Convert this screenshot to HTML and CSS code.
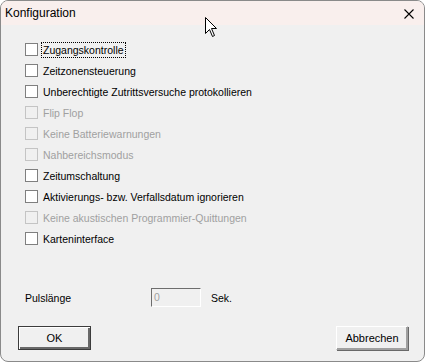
FILE: index.html
```html
<!DOCTYPE html>
<html lang="de">
<head>
    <meta charset="UTF-8">
    <meta name="viewport" content="width=device-width, initial-scale=1.0">
    <title>Konfiguration</title>
    <link rel="stylesheet" href="styles.css">
</head>
<body>
    <div class="window">
        <div class="titlebar">
            <span class="title">Konfiguration</span>
            <svg class="close" width="10" height="10" viewBox="0 0 10 10">
                <path d="M0.5 0.5 L9.5 9.5 M9.5 0.5 L0.5 9.5" stroke="#000" stroke-width="1.1" fill="none"/>
            </svg>
        </div>
        <div class="content">
            <ul class="options">
                <li><span class="box"></span><span class="label focus">Zugangskontrolle</span></li>
                <li><span class="box"></span><span class="label">Zeitzonensteuerung</span></li>
                <li><span class="box"></span><span class="label">Unberechtigte Zutrittsversuche protokollieren</span></li>
                <li class="disabled"><span class="box"></span><span class="label">Flip Flop</span></li>
                <li class="disabled"><span class="box"></span><span class="label">Keine Batteriewarnungen</span></li>
                <li class="disabled"><span class="box"></span><span class="label">Nahbereichsmodus</span></li>
                <li><span class="box"></span><span class="label">Zeitumschaltung</span></li>
                <li><span class="box"></span><span class="label">Aktivierungs- bzw. Verfallsdatum ignorieren</span></li>
                <li class="disabled"><span class="box"></span><span class="label">Keine akustischen Programmier-Quittungen</span></li>
                <li><span class="box"></span><span class="label">Karteninterface</span></li>
            </ul>
            <div class="pulse">
                <span class="pulse-label">Pulslänge</span>
                <span class="field">0</span>
                <span class="unit">Sek.</span>
            </div>
            <div class="buttons">
                <button class="btn default">OK</button>
                <button class="btn">Abbrechen</button>
            </div>
        </div>
        <svg class="cursor" width="13" height="21" viewBox="0 0 13 21">
            <path d="M0.5 0.5 L0.5 16.5 L4.5 12.5 L7.5 19.5 L9.5 18.5 L6.5 11.5 L11.5 11.5 Z" fill="#fff" stroke="#000" stroke-width="1" stroke-linejoin="miter"/>
        </svg>
    </div>
</body>
</html>
```

FILE: styles.css
```css
body, ul {
    margin: 0;
    padding: 0;
}

body {
    font-family: "Liberation Sans", Arial, sans-serif;
    font-size: 10.5px;
    background-color: #ffffff;
}

.window {
    position: relative;
    width: 425px;
    height: 362px;
    box-sizing: border-box;
    border: 1px solid #8a8a8a;
    border-radius: 8px;
    background-color: #f0f0f0;
    overflow: hidden;
    display: flex;
    flex-direction: column;
}

.titlebar {
    height: 24px;
    background-color: #f9efed;
    display: flex;
    align-items: center;
    justify-content: space-between;
    padding: 0 10px 0 4px;
}

.title {
    font-family: "Liberation Sans", Arial, sans-serif;
    font-size: 12px;
    color: #000;
}

.close {
    display: block;
    margin-top: 1px;
}

.content {
    flex: 1;
    display: flex;
    flex-direction: column;
    padding: 14px 14px 0 17px;
}

.options {
    list-style: none;
    padding-left: 7px;
}

.options li {
    height: 21px;
    display: flex;
    align-items: center;
    gap: 4px;
    color: #000;
}

.box {
    width: 11px;
    height: 11px;
    border: 1px solid #7f7f7f;
    background-color: #ffffff;
}

.label {
    padding: 0 1px;
    line-height: 14px;
}

.focus {
    outline: 1px dotted #000;
    outline-offset: 0;
}

.options li.disabled {
    color: #a0a0a0;
}

.disabled .box {
    background-color: #f0f0f0;
    border-color: #c4c4c4;
}

.pulse {
    display: flex;
    align-items: center;
    margin-top: 39px;
    padding-left: 7px;
    height: 19px;
}

.pulse-label {
    width: 126px;
}

.field {
    width: 46px;
    height: 17px;
    box-sizing: content-box;
    border: 1px solid #a0a0a0;
    border-top-color: #6d6d6d;
    border-left-color: #6d6d6d;
    border-right-color: #ffffff;
    border-bottom-color: #ffffff;
    color: #a0a0a0;
    line-height: 17px;
    padding-left: 2px;
    margin-right: 10px;
}

.buttons {
    display: flex;
    justify-content: space-between;
    margin-top: 19px;
}

.btn {
    font-family: "Liberation Sans", Arial, sans-serif;
    font-size: 11px;
    color: #000;
    height: 24px;
    background-color: #f0f0f0;
    border: 1px solid #a0a0a0;
    border-top-color: #ffffff;
    border-left-color: #ffffff;
    box-shadow: inset -1px -1px 0 #a0a0a0, 1px 1px 0 #696969;
    padding: 0;
    width: 72px;
    margin-right: 2px;
}

.btn.default {
    width: 73px;
    margin-left: 0;
    border: 1px solid #3c3c3c;
    box-shadow: inset 1px 1px 0 #ffffff, inset -2px -2px 0 #696969;
}

.cursor {
    position: absolute;
    left: 204px;
    top: 16px;
}
```
